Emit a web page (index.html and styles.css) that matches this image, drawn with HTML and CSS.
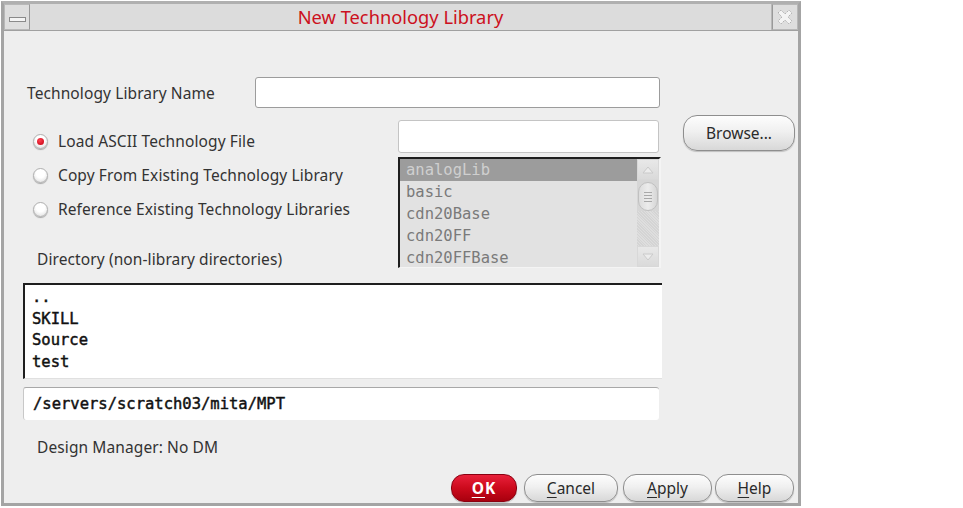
FILE: index.html
```html
<!DOCTYPE html>
<html>
<head>
<meta charset="utf-8">
<link rel="stylesheet" href="styles.css">
</head>
<body>
<div class="window">
  <div class="titlebar">
    <div class="tb-btn tb-min"><span class="dash"></span></div>
    <div class="title">New Technology Library</div>
    <div class="tb-btn tb-close">
      <svg width="18" height="18" viewBox="0 0 18 18">
        <path d="M2 5 L5 2 L9 6 L13 2 L16 5 L12 9 L16 13 L13 16 L9 12 L5 16 L2 13 L6 9 Z" fill="#f4f4f4" stroke="#b0b0b0" stroke-width="1" stroke-dasharray="1.5 1"/>
      </svg>
    </div>
  </div>
  <div class="body">
    <div class="row-name">
      <div class="lbl name-lbl">Technology Library Name</div>
      <div class="field name-field"></div>
    </div>
    <div class="mid">
      <div class="left">
        <div class="radio-row"><span class="radio on"></span><span class="lbl">Load ASCII Technology File</span></div>
        <div class="radio-row"><span class="radio"></span><span class="lbl">Copy From Existing Technology Library</span></div>
        <div class="radio-row"><span class="radio"></span><span class="lbl">Reference Existing Technology Libraries</span></div>
        <div class="lbl dir-lbl">Directory (non-library directories)</div>
      </div>
      <div class="center">
        <div class="field file-field"></div>
        <div class="listbox">
          <div class="items">
            <div class="item sel">analogLib</div>
            <div class="item">basic</div>
            <div class="item">cdn20Base</div>
            <div class="item">cdn20FF</div>
            <div class="item">cdn20FFBase</div>
          </div>
          <div class="scrollbar">
            <div class="arrow up"><svg width="14" height="10" viewBox="0 0 14 10"><path d="M2 8 L7 2 L12 8 Z" fill="#ececec" stroke="#cacaca"/></svg></div>
            <div class="thumb"><span></span><span></span><span></span><span></span></div>
            <div class="track"></div>
            <div class="arrow down"><svg width="14" height="10" viewBox="0 0 14 10"><path d="M2 2 L7 8 L12 2 Z" fill="#ececec" stroke="#cacaca"/></svg></div>
          </div>
        </div>
      </div>
      <div class="right">
        <div class="btn browse">Browse...</div>
      </div>
    </div>
    <div class="dirlist">
      <div class="ditem">..</div>
      <div class="ditem">SKILL</div>
      <div class="ditem">Source</div>
      <div class="ditem">test</div>
    </div>
    <div class="path">/servers/scratch03/mita/MPT</div>
    <div class="lbl dm">Design Manager: No DM</div>
    <div class="buttons">
      <div class="btn ok"><u>O</u>K</div>
      <div class="btn cancel"><u>C</u>ancel</div>
      <div class="btn apply"><u>A</u>pply</div>
      <div class="btn help"><u>H</u>elp</div>
    </div>
  </div>
</div>
</body>
</html>
```

FILE: styles.css
```css
html, body {
  margin: 0;
  padding: 0;
  background: #ffffff;
}
body {
  font-family: "Noto Sans", "Open Sans", sans-serif;
}
.window {
  margin: 1px 0 0 1px;
  width: 800px;
  height: 505px;
  box-sizing: border-box;
  border: 3px solid #a4a4a4;
  border-top-color: #b0b0b0;
  background: #eeeeee;
  display: flex;
  flex-direction: column;
}
.titlebar {
  height: 27px;
  box-sizing: border-box;
  display: flex;
  align-items: stretch;
  background: #dcdcdc;
  border-bottom: 1px solid #a0a0a0;
}
.tb-btn {
  width: 26px;
  box-sizing: border-box;
  display: flex;
  align-items: center;
  justify-content: center;
  background: #dedede;
}
.tb-min {
  border: 1px solid #b8b8b8;
  border-right: 1px solid #999;
}
.tb-close {
  border: 1px solid #b8b8b8;
  border-left: 1px solid #999;
}
.dash {
  display: block;
  width: 15px;
  height: 3px;
  border: 1px solid #8a8a8a;
  background: #f4f4f4;
  margin-top: 4px;
}
.title {
  flex: 1;
  text-align: center;
  color: #cc1020;
  font-size: 18.3px;
  line-height: 26px;
  border-right: 1px solid #b8b8b8;
}
.body {
  flex: 1;
  display: flex;
  flex-direction: column;
}
.lbl {
  color: #333333;
  font-size: 15.5px;
  letter-spacing: 0.1px;
  line-height: 20px;
  white-space: nowrap;
}
.row-name {
  margin-top: 46px;
  padding-left: 23px;
  display: flex;
  align-items: center;
  height: 31px;
}
.name-lbl {
  width: 228px;
}
.field {
  background: #ffffff;
  box-sizing: border-box;
  border: 1px solid #9c9c9c;
  border-radius: 3px;
}
.name-field {
  width: 405px;
  height: 31px;
}
.mid {
  margin-top: 7px;
  display: grid;
  grid-template-columns: 394px 285px 112px;
  height: 153px;
}
.left {
  padding-top: 9px;
}
.radio-row {
  height: 34px;
  display: flex;
  align-items: center;
  padding-left: 29px;
}
.radio {
  width: 15px;
  height: 15px;
  box-sizing: border-box;
  border-radius: 50%;
  border: 1px solid #b0b0b0;
  background: radial-gradient(circle at 50% 35%, #ffffff 40%, #d8d8d8 100%);
  margin-right: 10px;
  position: relative;
  box-shadow: 0 1px 1px rgba(0,0,0,0.3);
}
.radio.on::after {
  content: "";
  position: absolute;
  left: 3px;
  top: 3px;
  width: 7px;
  height: 7px;
  border-radius: 50%;
  background: radial-gradient(circle at 40% 35%, #ff4050, #c00010);
}
.dir-lbl {
  margin-top: 24px;
  padding-left: 33px;
  line-height: 18px;
}
.center {
  width: 263px;
  display: flex;
  flex-direction: column;
}
.file-field {
  margin-top: 5px;
  width: 261px;
  height: 33px;
  border-color: #c4c4c4;
}
.listbox {
  margin-top: 4px;
  height: 111px;
  box-sizing: border-box;
  border-top: 2px solid #1e1e1e;
  border-left: 2px solid #1e1e1e;
  border-right: 2px solid #f4f4f4;
  border-bottom: 1px solid #f4f4f4;
  background: #e2e2e2;
  display: flex;
  overflow: hidden;
}
.items {
  flex: 1;
}
.item {
  font-family: "DejaVu Sans Mono", monospace;
  font-size: 15.5px;
  height: 22px;
  line-height: 22px;
  color: #7a7a7a;
  padding-left: 6px;
  white-space: nowrap;
}
.item.sel {
  background: #9c9c9c;
  color: #cfcfcf;
}
.scrollbar {
  width: 22px;
  display: flex;
  flex-direction: column;
  background: #d6d6d6;
}
.arrow {
  height: 21px;
  box-sizing: border-box;
  border: 1px solid #d8d8d8;
  background: linear-gradient(#e8e8e8, #dadada);
  display: flex;
  align-items: center;
  justify-content: center;
}
.thumb {
  margin: 2px 1px 0;
  height: 27px;
  border-radius: 10px;
  border: 1px solid #c0c0c0;
  background: linear-gradient(90deg, #dcdcdc, #ececec, #d6d6d6);
  display: flex;
  flex-direction: column;
  align-items: center;
  justify-content: center;
  gap: 2px;
}
.thumb span {
  display: block;
  width: 8px;
  height: 1px;
  background: #a8a8a8;
}
.track {
  flex: 1;
  background: repeating-linear-gradient(45deg, #d4d4d4 0 1px, #dedede 1px 2px);
}
.right {
  display: flex;
  flex-direction: column;
}
.btn {
  box-sizing: border-box;
  border: 1px solid #8e8e8e;
  border-radius: 13px;
  background: linear-gradient(#fdfdfd 0%, #f0f0f0 45%, #d8d8d8 100%);
  color: #2a2a2a;
  font-size: 15.5px;
  display: flex;
  align-items: center;
  justify-content: center;
  box-shadow: 0 1px 1px rgba(0,0,0,0.2);
}
.btn u {
  text-decoration-thickness: 1px;
  text-underline-offset: 3px;
}
.browse {
  height: 36px;
  width: 112px;
  border-radius: 14px;
}
.dirlist {
  margin-top: 15px;
  margin-left: 19px;
  width: 639px;
  height: 96px;
  box-sizing: border-box;
  border-top: 2px solid #1e1e1e;
  border-left: 2px solid #1e1e1e;
  border-bottom: 1px solid #e0e0e0;
  background: #ffffff;
  padding-top: 2px;
}
.ditem {
  font-family: "DejaVu Sans Mono", monospace;
  font-size: 15.5px;
  -webkit-text-stroke: 0.45px #111;
  height: 21.5px;
  line-height: 21.5px;
  color: #111111;
  padding-left: 7px;
}
.path {
  margin-top: 8px;
  margin-left: 19px;
  width: 636px;
  height: 33px;
  box-sizing: border-box;
  background: #ffffff;
  border-top: 1px solid #a8a8a8;
  border-left: 1px solid #c8c8c8;
  border-radius: 3px;
  font-family: "DejaVu Sans Mono", monospace;
  font-size: 15.5px;
  -webkit-text-stroke: 0.45px #111;
  color: #111111;
  line-height: 32px;
  padding-left: 9px;
}
.dm {
  margin-top: 17px;
  padding-left: 33px;
}
.buttons {
  margin-top: 17px;
  display: flex;
  justify-content: flex-end;
  padding-right: 4px;
}
.buttons .btn {
  height: 28px;
}
.ok {
  width: 66px;
  background: linear-gradient(#e8203a 0%, #cc0a1c 50%, #a8000e 100%);
  border-color: #8a0010;
  color: #ffffff;
  font-weight: bold;
  letter-spacing: 1px;
}
.cancel { width: 94px; margin-left: 7px; }
.apply { width: 89px; margin-left: 5px; }
.help { width: 79px; margin-left: 3px; }
```
